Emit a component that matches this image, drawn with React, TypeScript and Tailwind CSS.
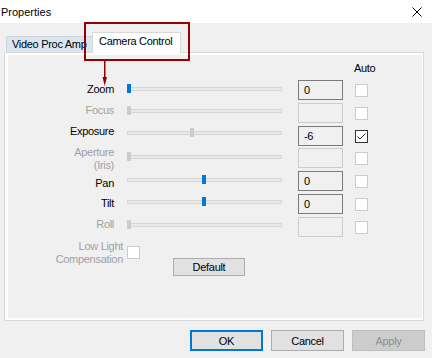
import React from "react";

type Row = {
  label: string[];
  on: boolean;
  lab: string;
  sl: string;
  thumb: number;
  thumbColor: string;
  value: string;
  box: boolean;
  cb: "off" | "on";
  h: string;
};

const rows: Row[] = [
  { label: ["Zoom"], on: true, lab: "mt-[2px]", sl: "mt-0", thumb: 0, thumbColor: "bg-[#0078d7]", value: "0", box: true, cb: "off", h: "h-[23px]" },
  { label: ["Focus"], on: false, lab: "mt-0", sl: "mt-[-1px]", thumb: 0, thumbColor: "bg-[#cccccc]", value: "", box: false, cb: "off", h: "h-[23px]" },
  { label: ["Exposure"], on: true, lab: "mt-[-2px]", sl: "mt-[-2px]", thumb: 63, thumbColor: "bg-[#cccccc]", value: "-6", box: true, cb: "on", h: "h-[22px]" },
  { label: ["Aperture", "(Iris)"], on: false, lab: "mt-[-2px]", sl: "mt-0", thumb: 0, thumbColor: "bg-[#cccccc]", value: "", box: false, cb: "off", h: "h-[23px]" },
  { label: ["Pan"], on: true, lab: "mt-[5px]", sl: "mt-0", thumb: 75, thumbColor: "bg-[#0078d7]", value: "0", box: true, cb: "off", h: "h-[23px]" },
  { label: ["Tilt"], on: true, lab: "mt-[2px]", sl: "mt-[-1px]", thumb: 75, thumbColor: "bg-[#0078d7]", value: "0", box: true, cb: "off", h: "h-[23px]" },
  { label: ["Roll"], on: false, lab: "mt-0", sl: "mt-[-1px]", thumb: 0, thumbColor: "bg-[#cccccc]", value: "", box: false, cb: "off", h: "h-[23px]" },
];

function Slider({ thumb, color }: { thumb: number; color: string }) {
  return (
    <div className="relative w-[155px] h-[18px] flex items-center">
      <div className="w-full h-[4px] border border-[#d6d6d6] bg-[#e7eaea]" />
      <div className={`absolute top-[4px] w-[4px] h-[9px] ${color}`} style={{ left: thumb }} />
    </div>
  );
}

function Checkbox({ checked }: { checked: boolean }) {
  return (
    <div
      className={`w-[13px] h-[13px] border bg-white ${checked ? "border-[#333333]" : "border-[#cccccc]"}`}
    >
      {checked && (
        <svg width="11" height="11" viewBox="0 0 11 11" className="block">
          <polyline points="1.5,5.5 4,8 9.5,2.5" fill="none" stroke="#333333" strokeWidth="1" />
        </svg>
      )}
    </div>
  );
}

export default function App() {
  return (
    <div className="relative w-[432px] h-[358px] bg-[#f0f0f0] overflow-hidden text-[11px] tracking-[-0.3px] text-black font-['Liberation_Sans',Arial,sans-serif]">
      {/* Title bar */}
      <div className="h-[23px] bg-white flex items-start justify-between">
        <div className="pl-[1px] pt-[5px] leading-[14px] tracking-normal">Properties</div>
        <svg width="10" height="10" viewBox="0 0 10 10" className="mt-[7px] mr-[10px]">
          <line x1="0.5" y1="0.5" x2="9.5" y2="9.5" stroke="#000" strokeWidth="1" />
          <line x1="9.5" y1="0.5" x2="0.5" y2="9.5" stroke="#000" strokeWidth="1" />
        </svg>
      </div>

      {/* Tabs */}
      <div className="flex items-end pl-[6px] pt-[9px] h-[29px]">
        <div className="w-[88px] h-[16px] border border-b-0 border-[#cdd6de] bg-[#d8e6f2] pl-[5px] leading-[14px] whitespace-nowrap overflow-hidden">
          Video Proc Amp
        </div>
        <div className="relative z-10 -ml-[2px] mb-[-1px] w-[89px] h-[21px] border border-b-0 border-[#d9d9d9] bg-white pl-[6px] pt-[1px] leading-[14px] whitespace-nowrap">
          Camera Control
        </div>
      </div>

      {/* Panel */}
      <div className="ml-[4px] w-[420px] h-[269px] border border-[#d9d9d9] bg-white pl-[3px] pt-[2px] pr-[1px] pb-[2px] flex">
        <div className="flex-1 bg-[#f0f0f0] flex flex-col">
          <div className="h-[25px] pt-[6px] pl-[346px] leading-[14px]">Auto</div>
          {rows.map((r) => (
            <div key={r.label.join(" ")} className={`flex items-start ${r.h}`}>
              <div
                className={`w-[106px] shrink-0 text-right ${r.label.length > 1 ? "leading-[13px]" : "leading-[14px]"} ${r.lab} ${r.on ? "text-black" : "text-[#a0a0a0]"}`}
              >
                {r.label.map((l) => (
                  <div key={l}>{l}</div>
                ))}
              </div>
              <div className={`ml-[13px] shrink-0 ${r.sl}`}>
                <Slider thumb={r.thumb} color={r.thumbColor} />
              </div>
              <div
                className={`ml-[16px] shrink-0 w-[45px] h-[20px] border bg-[#f0f0f0] pl-[5px] leading-[18px] ${r.box ? "border-[#7a7a7a]" : "border-[#cccccc]"}`}
              >
                {r.value}
              </div>
              <div className="ml-[12px] mt-[4px] shrink-0">
                <Checkbox checked={r.cb === "on"} />
              </div>
            </div>
          ))}
          <div className="flex items-start">
            <div className="w-[115px] shrink-0 text-right leading-[13px] text-[#a0a0a0]">
              <div>Low Light</div>
              <div>Compensation</div>
            </div>
            <div className="ml-[4px] mt-[6px] shrink-0">
              <Checkbox checked={false} />
            </div>
            <div className="ml-[33px] mt-[18px] w-[72px] h-[18px] border border-[#adadad] bg-[#e1e1e1] flex items-center justify-center leading-[14px]">
              Default
            </div>
          </div>
        </div>
      </div>

      {/* Buttons */}
      <div className="mt-[9px] flex justify-end gap-[8px] pr-[7px]">
        <div className="w-[73px] h-[21px] border-2 border-[#0078d7] bg-[#e1e1e1] flex items-center justify-center leading-[14px]">
          OK
        </div>
        <div className="w-[73px] h-[21px] border border-[#adadad] bg-[#e1e1e1] flex items-center justify-center leading-[14px]">
          Cancel
        </div>
        <div className="w-[73px] h-[21px] border border-[#bfbfbf] bg-[#cccccc] text-[#8f8f8f] flex items-center justify-center leading-[14px]">
          Apply
        </div>
      </div>

      {/* Annotation overlay */}
      <div className="absolute left-[84px] top-[22px] w-[106px] h-[39px] border-2 border-[#960000] z-20" />
      <svg className="absolute left-[100px] top-[60px] z-20" width="10" height="28" viewBox="0 0 10 28">
        <line x1="4.75" y1="0" x2="4.75" y2="18" stroke="#960000" strokeWidth="1.5" />
        <polygon points="2.5,17 7,17 4.75,26" fill="#960000" />
      </svg>
    </div>
  );
}
